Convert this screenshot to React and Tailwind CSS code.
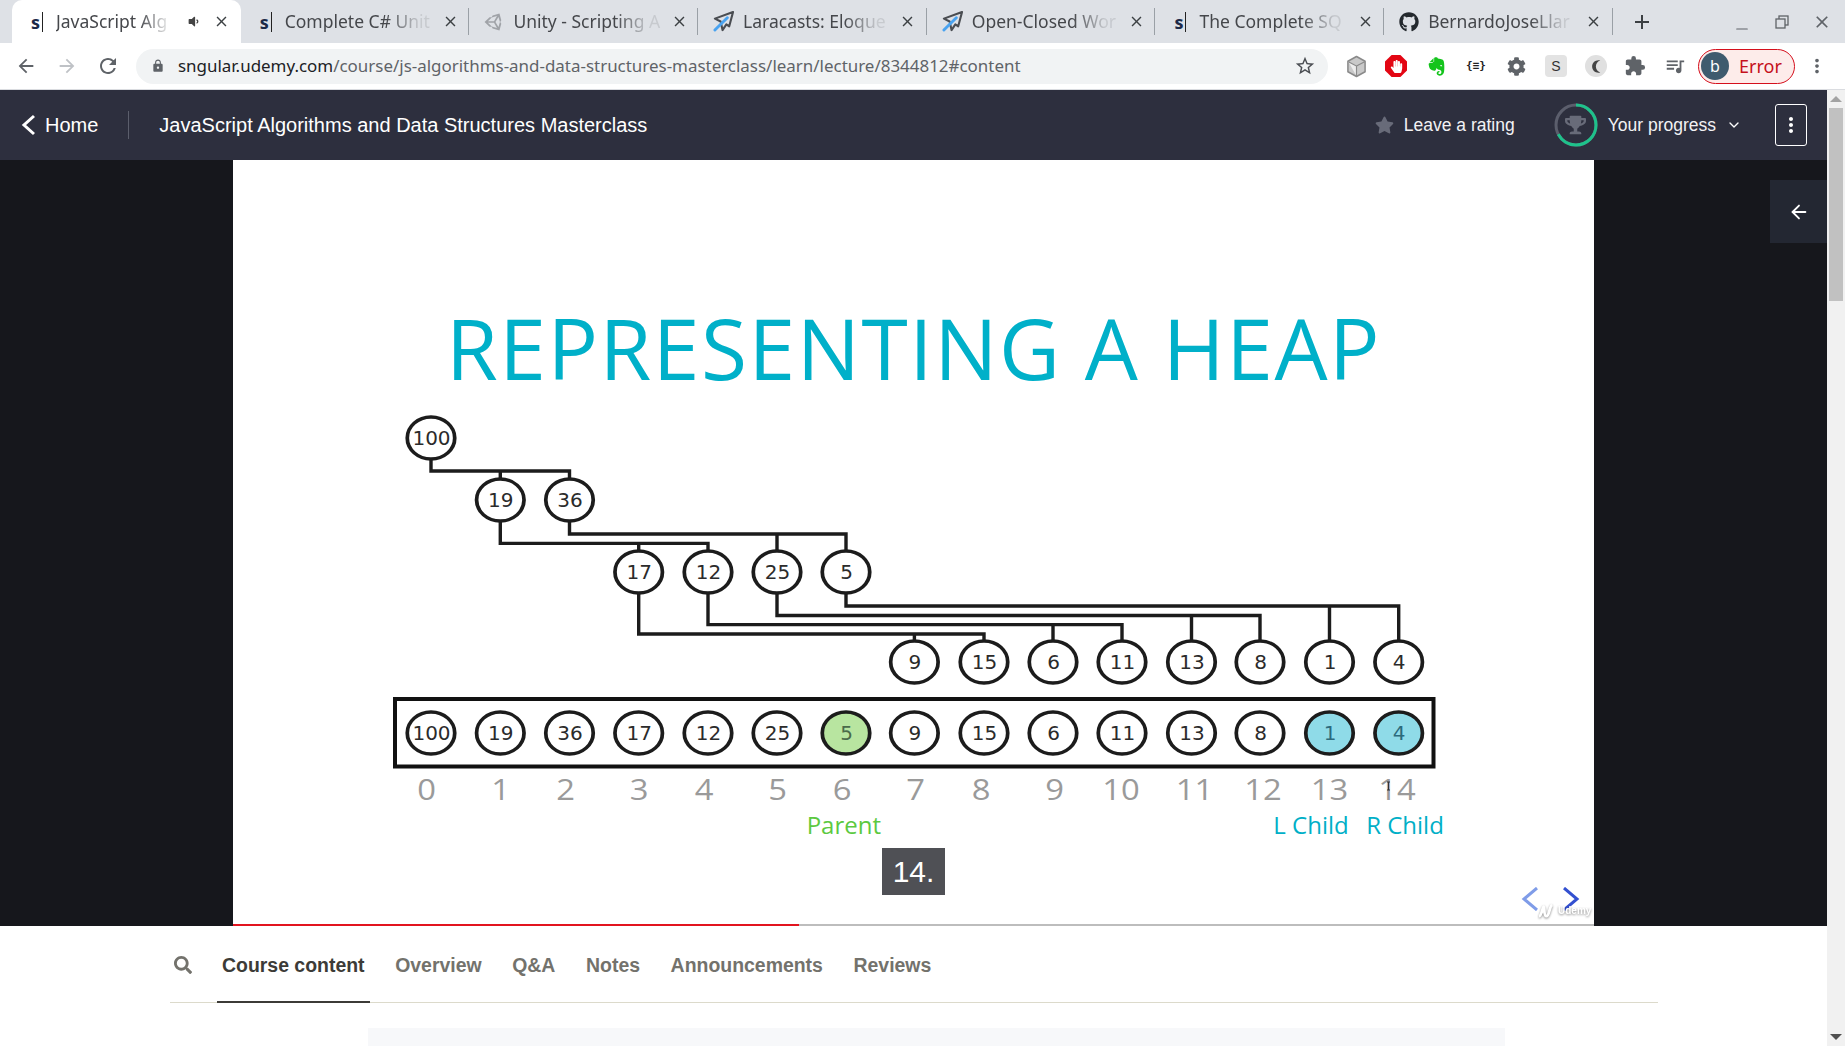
import React from "react";
import { MdArrowBack, MdArrowForward, MdRefresh, MdLock, MdStarBorder, MdMoreVert, MdClose, MdAdd, MdExtension, MdQueueMusic, MdBrightness3 } from "react-icons/md";
import { FaGithub, FaStar, FaSearch, FaTrophy, FaHandPaper, FaEvernote, FaUnity, FaVolumeDown, FaCog } from "react-icons/fa";
import { ChevronDown, ArrowLeft, Minus } from "lucide-react";

const xs = [431, 500.3, 569.5, 638.7, 708, 777, 846, 914.4, 984, 1053, 1122, 1191.5, 1260, 1329.5, 1398.7];
const values = [100, 19, 36, 17, 12, 25, 5, 9, 15, 6, 11, 13, 8, 1, 4];
const indexXs = [426.7, 500.5, 565.6, 639, 704, 777.6, 842, 915.5, 981, 1054.6, 1121, 1194.5, 1263, 1329.5, 1397];

// Y coordinates below are page coords, the svg viewBox starts at y=400
const treeLines = [
  "M431 438V471H569.5V500M500.3 471V500",
  "M500.3 500V543.4H708V572M638.7 543.4V572",
  "M569.5 500V534H846V572M777 534V572",
  "M638.7 572V634H984V662M914.4 634V662",
  "M708 572V624.6H1122V662M1053 624.6V662",
  "M777 572V615.5H1260V662M1191.5 615.5V662",
  "M846 572V606H1398.7V662M1329.5 606V662",
];

const treeRows = [
  { y: 438, from: 0, to: 1 },
  { y: 500, from: 1, to: 3 },
  { y: 572, from: 3, to: 7 },
  { y: 662, from: 7, to: 15 },
];

function Node({ x, y, value, fill = "#fff", color = "#2b2b2b" }) {
  return (
    <g transform={`translate(${x} ${y})`}>
      <circle r="21" fill={fill} stroke="#1c1c1c" strokeWidth="3.3" transform="scale(1.13 1)" />
      <text x="0.5" y="7" textAnchor="middle" fontSize="20" fontFamily="DejaVu Sans" fill={color}>{value}</text>
    </g>
  );
}

function HeapDiagram() {
  return (
    <svg width="1361" height="445" viewBox="233 400 1361 445" className="block shrink-0">
      <g fill="none" stroke="#1c1c1c" strokeWidth="3.4">
        {treeLines.map((d) => <path key={d} d={d} />)}
      </g>
      {treeRows.map((row) =>
        xs.slice(row.from, row.to).map((x, i) => (
          <Node key={x} x={x} y={row.y} value={values[row.from + i]} />
        ))
      )}
      <rect x="395" y="699" width="1038.5" height="67.5" fill="#fff" stroke="#111" strokeWidth="4" />
      {xs.map((x, i) => {
        let fill = "#fff";
        let color = "#2b2b2b";
        if (i === 6) { fill = "#b8e5a0"; color = "#4a6a4a"; }
        if (i > 12) { fill = "#8fdbe8"; color = "#2c6a7c"; }
        return <Node key={x} x={x} y={733} value={values[i]} fill={fill} color={color} />;
      })}
      <g fontFamily="Open Sans" fontSize="29" fill="#9a9a9a" textAnchor="middle">
        {indexXs.map((x, i) => (
          <text key={x} transform={`translate(${x} 800) scale(1.13 1)`}>{i}</text>
        ))}
      </g>
      <g fontFamily="Open Sans" fontSize="24" textAnchor="middle">
        <text x="843.8" y="834" fill="#5cc93f">Parent</text>
        <text x="1311" y="834" fill="#00afc7">L Child</text>
        <text x="1405" y="834" fill="#00afc7">R Child</text>
      </g>
      <path d="M1387 782h3M1387 790h3M1388.5 782v8" stroke="#333" strokeWidth="1" fill="none" />
    </svg>
  );
}

function SFav() {
  return (
    <span className="flex items-center w-5 h-5 shrink-0">
      <span className="text-[18px] font-bold leading-none text-[#1c2a48] font-['Open_Sans',sans-serif] ml-[4px]">s</span>
      <span className="w-px h-[20px] bg-[#222] ml-[2px]"></span>
    </span>
  );
}

function PlaneFav() {
  return (
    <svg viewBox="0 0 22 22" className="w-[21px] h-[21px] shrink-0">
      <path d="M21 1L2 8l6 3 2 9 4-6 3 2z" fill="none" stroke="#4a4d52" strokeWidth="2.2" strokeLinejoin="round" />
      <path d="M15 7L2 20" stroke="#4aa3f0" strokeWidth="3" strokeLinecap="round" />
    </svg>
  );
}

const tabs = [
  { title: "JavaScript Alg", icon: <SFav />, active: true, sound: true },
  { title: "Complete C# Unit", icon: <SFav /> },
  { title: "Unity - Scripting A", icon: <FaUnity className="w-5 h-5 shrink-0 text-[#a0a3a8]" /> },
  { title: "Laracasts: Eloque", icon: <PlaneFav /> },
  { title: "Open-Closed Wor", icon: <PlaneFav /> },
  { title: "The Complete SQ", icon: <SFav /> },
  { title: "BernardoJoseLlar", icon: <FaGithub className="w-5 h-5 shrink-0 text-[#24292e]" /> },
];

function ChromeTab({ tab }) {
  return (
    <div className={`w-[228.7px] h-[43px] shrink-0 flex items-center pl-[15px] ${tab.active ? "bg-white rounded-t-[10px]" : ""}`}>
      {tab.icon}
      <span className="ml-[9px] flex-1 min-w-0 whitespace-nowrap text-[17.5px] text-[#45474b] [mask-image:linear-gradient(to_right,black_68%,rgba(0,0,0,0.15)_90%)]">
        {tab.title}
      </span>
      {tab.sound && <FaVolumeDown className="w-[13px] h-[13px] ml-[8px] text-[#444] shrink-0" />}
      <MdClose className={`w-[17px] h-[17px] text-[#3c4043] shrink-0 ${tab.sound ? "ml-[13px]" : "ml-[7.500px]"}`} />
      <span className={`ml-[9.500px] w-px h-[27px] shrink-0 ${tab.active ? "" : "bg-[#9aa0a6]"}`}></span>
    </div>
  );
}

function TabStrip() {
  return (
    <div className="h-[43px] bg-[#dee1e6] flex items-center pl-[12px] shrink-0">
      {tabs.map((tab) => <ChromeTab key={tab.title} tab={tab} />)}
      <MdAdd className="w-[24px] h-[24px] text-[#3c4043] ml-[17px]" />
      <div className="ml-auto flex items-center text-[#5f6368]">
        <Minus className="w-[18px] h-[18px] mt-[14px]" strokeWidth={1.6} />
        <svg viewBox="0 0 14 14" className="w-[14px] h-[14px] ml-[24px]" fill="none" stroke="#5f6368" strokeWidth="1.3">
          <rect x="4" y="1" width="9" height="9" />
          <rect x="1" y="4" width="9" height="9" fill="#dee1e6" />
        </svg>
        <MdClose className="w-[20px] h-[20px] ml-[23px] mr-[13px]" />
      </div>
    </div>
  );
}

function CubeIcon() {
  return (
    <svg viewBox="0 0 22 24" className="w-[21px] h-[23px]">
      <path d="M11 1.5l9 5v11l-9 5-9-5v-11z" fill="#c9c9c9" stroke="#8a8a8a" strokeWidth="1.6" strokeLinejoin="round" />
      <path d="M2.5 7l8.5 4.5V22" fill="#ededed" stroke="#8a8a8a" strokeWidth="1.2" />
      <path d="M11 11.5L19.500 7" fill="none" stroke="#8a8a8a" strokeWidth="1.2" />
    </svg>
  );
}

function Toolbar() {
  return (
    <div className="h-[47px] bg-white flex items-center shrink-0 border-b border-[#dadce0]">
      <MdArrowBack className="w-[22px] h-[22px] ml-[15px] text-[#5f6368]" />
      <MdArrowForward className="w-[22px] h-[22px] ml-[19px] text-[#bfc2c6]" />
      <MdRefresh className="w-[24px] h-[24px] ml-[18px] text-[#5f6368]" />
      <div className="ml-[16px] w-[1192px] h-[35px] bg-[#f1f3f4] rounded-full flex items-center">
        <MdLock className="w-[14px] h-[14px] ml-[15px] text-[#5f6368]" />
        <span className="ml-[13px] text-[16.95px] text-[#5f6368] whitespace-nowrap">
          <span className="text-[#202124]">sngular.udemy.com</span>/course/js-algorithms-and-data-structures-masterclass/learn/lecture/8344812#content
        </span>
        <MdStarBorder className="ml-auto mr-[12px] w-[22px] h-[22px] text-[#4a4d52]" />
      </div>
      <div className="flex items-center ml-[17px] w-[22px] justify-center"><CubeIcon /></div>
      <div className="ml-[18px] w-[22px] h-[22px] bg-[#e30613] [clip-path:polygon(30%_0,70%_0,100%_30%,100%_70%,70%_100%,30%_100%,0_70%,0_30%)] flex items-center justify-center"><FaHandPaper className="w-[13px] h-[13px] text-white" /></div>
      <div className="ml-[18px] w-[22px] flex justify-center"><FaEvernote className="w-[21px] h-[21px] text-[#14c41c]" /></div>
      <div className="ml-[18px] w-[22px] text-center text-[11px] font-bold text-[#222] font-['DejaVu_Sans_Mono',monospace]">{"{≡}"}</div>
      <div className="ml-[18px] w-[22px] flex justify-center"><FaCog className="w-[19px] h-[19px] text-[#5f6368]" /></div>
      <div className="ml-[18px] w-[22px] h-[22px] bg-[#e3e3e3] rounded-[4px] flex items-center justify-center text-[14px] text-[#333] font-['Liberation_Sans',sans-serif]">S</div>
      <div className="ml-[18px] w-[22px] h-[22px] bg-[#e0e0e0] rounded-full flex items-center justify-center"><MdBrightness3 className="w-[15px] h-[15px] text-[#444] rotate-180" /></div>
      <div className="ml-[17px] w-[22px] flex justify-center"><MdExtension className="w-[22px] h-[22px] text-[#5f6368]" /></div>
      <div className="ml-[18px] w-[22px] flex justify-center"><MdQueueMusic className="w-[24px] h-[24px] text-[#5f6368]" /></div>
      <div className="ml-[12px] w-[97px] h-[35px] rounded-full border border-[#d50f1c] bg-[#fdecea] flex items-center">
        <span className="ml-[2px] w-[28px] h-[28px] rounded-full bg-[#3f5b6e] text-white text-[16px] flex items-center justify-center">b</span>
        <span className="ml-[10px] text-[18px] text-[#c5101c]">Error</span>
      </div>
      <MdMoreVert className="w-[22px] h-[22px] ml-[11px] text-[#5f6368]" />
    </div>
  );
}

function ProgressRing() {
  return (
    <svg width="44" height="44" viewBox="0 0 44 44" className="shrink-0">
      <circle cx="22" cy="22" r="20" fill="none" stroke="#5b5e6c" strokeWidth="3" />
      <circle cx="22" cy="22" r="20" fill="none" stroke="#1ec28b" strokeWidth="3" strokeDasharray="84 126" transform="rotate(-90 22 22)" />
    </svg>
  );
}

function CourseHeader() {
  return (
    <div className="h-[70px] bg-[#2d2f3e] flex items-center text-white shrink-0 font-['Liberation_Sans',sans-serif]">
      <svg viewBox="0 0 16 22" className="w-[16px] h-[22px] ml-[20px]" fill="none" stroke="#fff" strokeWidth="3">
        <path d="M14 2L4 11l10 9" />
      </svg>
      <span className="ml-[9px] text-[20px]">Home</span>
      <span className="ml-[30px] w-px h-[28px] bg-[#5b5e6c]"></span>
      <span className="ml-[30px] text-[20px]">JavaScript Algorithms and Data Structures Masterclass</span>
      <FaStar className="ml-auto w-[19px] h-[18px] text-[#686b79]" />
      <span className="ml-[10px] text-[17.5px] text-[#f2f2f4]">Leave a rating</span>
      <div className="relative ml-[39px] flex items-center justify-center">
        <ProgressRing />
        <FaTrophy className="absolute w-[21px] h-[20px] text-[#686b79]" />
      </div>
      <span className="ml-[10px] text-[17.5px] text-[#f2f2f4]">Your progress</span>
      <ChevronDown className="ml-[10px] w-[16px] h-[16px] text-white" />
      <div className="ml-[33px] mr-[20px] w-[32px] h-[42px] border border-white rounded-[3px] flex items-center justify-center">
        <MdMoreVert className="w-[24px] h-[24px]" />
      </div>
    </div>
  );
}

function Slide() {
  return (
    <div className="relative ml-[233px] w-[1361px] h-full bg-white flex flex-col items-center overflow-hidden">
      <div className="h-[240px] shrink-0 pt-[146px] text-[84px] leading-[84px] tracking-[1.5px] font-normal whitespace-nowrap text-[#00b0c9] font-['Open_Sans',sans-serif]">
        REPRESENTING A HEAP
      </div>
      <HeapDiagram />

      {/* caption */}
      <div className="absolute left-[649px] top-[688px] w-[63px] h-[47px] bg-[#4f5055] text-white text-[30px] flex items-center justify-center font-['Liberation_Sans',sans-serif]">
        14.
      </div>

      {/* slide arrows */}
      <svg viewBox="0 0 18 24" className="absolute left-[1288px] top-[727px] w-[18px] h-[24px]" fill="none" stroke="#7f9ce8" strokeWidth="3">
        <path d="M16 1L3 12l13 11" />
      </svg>
      <svg viewBox="0 0 18 24" className="absolute left-[1329px] top-[727px] w-[18px] h-[24px]" fill="none" stroke="#3350d0" strokeWidth="3">
        <path d="M2 1l13 11L2 23" />
      </svg>
      {/* watermark */}
      <div className="absolute left-[1304px] top-[742px] flex items-center text-white font-['Liberation_Sans',sans-serif] [filter:drop-shadow(0_1px_1px_rgba(0,0,0,0.45))]">
        <svg viewBox="0 0 18 18" className="w-[17px] h-[17px]" fill="none" stroke="#fff" strokeWidth="3">
          <path d="M2 15c3 0 4-10 5-10s0 10 3 10 3-10 6-12" />
        </svg>
        <span className="ml-[4px] text-[10px] font-bold">Udemy</span>
      </div>

      {/* progress */}
      <div className="absolute left-0 right-0 bottom-0 h-[2px] bg-[#bdbdbd]">
        <div className="h-full w-[566px] bg-[#e2141f]"></div>
      </div>
    </div>
  );
}

const lectureTabs = ["Course content", "Overview", "Q&A", "Notes", "Announcements", "Reviews"];

function LectureTabs() {
  return (
    <div className="ml-[170px] w-[1488px] h-[77px] shrink-0 flex items-center border-b border-[#dcdacb] font-['Liberation_Sans',sans-serif]">
      <FaSearch className="ml-[3.500px] mt-[2px] w-[18px] h-[18px] text-[#73726c]" />
      <div className="ml-[25.500px] flex h-full gap-[20.600px]">
        {lectureTabs.map((t, i) => (
          <div
            key={t}
            className={`h-[77px] flex items-center px-[5px] text-[19.45px] font-bold ${i === 0 ? "pt-[4px] text-[#3c3b37] border-b-[2px] border-[#3c3b37]" : "pt-[2px] text-[#73726c]"}`}
          >
            {t}
          </div>
        ))}
      </div>
    </div>
  );
}

function Scrollbar() {
  return (
    <div className="w-[18px] bg-[#f1f1f1] flex flex-col items-center shrink-0">
      <span className="mt-[6px] w-0 h-0 border-x-[6px] border-x-transparent border-b-[6px] border-b-[#a3a3a3]"></span>
      <div className="mt-[6px] w-[14px] h-[193px] bg-[#c1c1c1]"></div>
      <span className="mt-auto mb-[6px] w-0 h-0 border-x-[6px] border-x-transparent border-t-[6px] border-t-[#505050]"></span>
    </div>
  );
}

export default function App() {
  return (
    <div className="w-[1845px] h-[1046px] flex flex-col overflow-hidden bg-white font-['Noto_Sans',sans-serif]">
      <TabStrip />
      <Toolbar />
      <div className="flex flex-1 min-h-0">
        <div className="flex-1 min-w-0 flex flex-col relative">
          <CourseHeader />
          <div className="h-[766px] bg-[#16171c] shrink-0 relative">
            <Slide />
            <div className="absolute right-0 top-[20px] w-[57px] h-[63px] bg-[#232732] flex items-center justify-center">
              <ArrowLeft className="w-[22px] h-[22px] text-white" />
            </div>
          </div>
          <LectureTabs />
          <div className="ml-[368px] w-[1137px] mt-[25px] flex-1 bg-[#f7f8fa]"></div>
        </div>
        <Scrollbar />
      </div>
    </div>
  );
}
